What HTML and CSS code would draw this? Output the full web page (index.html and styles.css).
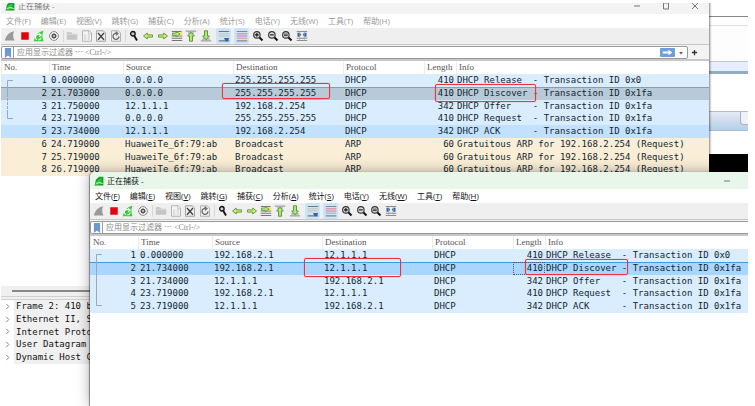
FILE: index.html
```html
<!DOCTYPE html>
<html lang="zh-CN">
<head>
<meta charset="utf-8">
<meta name="viewport" content="width=device-width, initial-scale=1">
<title>正在捕获</title>
<link rel="stylesheet" href="styles.css">
</head>
<body>
<svg class="defs" aria-hidden="true">
  <symbol id="fin" viewBox="0 0 16 16"><path d="M1 14C3 7 7 2.500 13.500 1.500C11.500 5 12 10 14 14Z"/></symbol>
  <symbol id="logo" viewBox="0 0 16 16"><path d="M1 15L3 6L8 1H15V15Z" fill="#149c2b"/><path d="M1 15C3 8 8 4 13 3C11 6 11 9 13 12Z" fill="#2fc442"/><path d="M3 12Q8 9 14 12" stroke="#fff" stroke-width="1.200" fill="none"/></symbol>
  <symbol id="stop" viewBox="0 0 16 16"><path d="M3 3H13V13H3Z" fill="#e3000f"/></symbol>
  <symbol id="restart" viewBox="0 0 16 16"><path d="M1 15C3 7 7 2.500 14 1C12 5 12 10 14 15Z" fill="#35cf35"/><path d="M5 13A3.500 3.500 0 0 1 9 6.500M8 4.500L11 6.800L8 9M11 10A3.500 3.500 0 0 1 7 13" stroke="#fff" stroke-width="1.500" fill="none"/></symbol>
  <symbol id="gear" viewBox="0 0 16 16"><circle cx="8" cy="8" r="5.800" fill="#fff" stroke="#777" stroke-width="1.200"/><circle cx="8" cy="8" r="3" fill="#555"/><path d="M8 4V12M4 8H12M5 5L11 11M11 5L5 11" stroke="#555" stroke-width="1.200"/><circle cx="8" cy="8" r="1.200" fill="#ddd"/></symbol>
  <symbol id="folder" viewBox="0 0 16 16"><path d="M1 3H7L8.500 5H15V13H1Z" fill="#c5c5c5"/><path d="M1 6H15" stroke="#dcdcdc"/></symbol>
  <symbol id="save" viewBox="0 0 16 16"><path d="M2 1H11L14 4V15H2Z" fill="#f4f4f4" stroke="#b2b2b2" stroke-width="1.300"/><path d="M10 1V5H14M4 7H7M9 7H12M4 9.500H7M9 9.500H12M4 12H7M9 12H12" stroke="#bbb" fill="none"/></symbol>
  <symbol id="close" viewBox="0 0 16 16"><path d="M2 1H11L14 4V15H2Z" fill="#eee" stroke="#999" stroke-width="1.200"/><path d="M4 4L12 13M12 4L4 13" stroke="#444" stroke-width="1.800"/></symbol>
  <symbol id="reload" viewBox="0 0 16 16"><path d="M2 1H11L14 4V15H2Z" fill="#eee" stroke="#aaa" stroke-width="1.200"/><path d="M12 8.500A4 4 0 1 1 9 4.500M7.500 2.500L10.500 4.700L8 7" stroke="#666" stroke-width="1.700" fill="none"/></symbol>
  <symbol id="find" viewBox="0 0 16 16"><circle cx="6.500" cy="5" r="3" fill="#ccc" stroke="#111" stroke-width="1.800"/><path d="M8.500 8L12 14" stroke="#111" stroke-width="2.500"/></symbol>
  <symbol id="arrow" viewBox="0 0 16 16"><path d="M2 8L7 4V6.500H14V9.500H7V12Z" fill="#c9ee88" stroke="#6a9a35" stroke-width="1.300"/></symbol>
  <symbol id="goto" viewBox="0 0 16 16"><path d="M1 2H14M1 8H15M1 11H15M1 14H15" stroke="#777" stroke-width="1.400"/><path d="M9 3H15V7H9Z" fill="#f3e45a"/><path d="M2 4H7V2L12 5.500L7 9V7H2Z" fill="#bdec80" stroke="#568b30"/></symbol>
  <symbol id="first" viewBox="0 0 16 16"><path d="M1 1.500H15M4 4H12" stroke="#888" stroke-width="1.300"/><path d="M8 3L12.500 8H10V15H6V8H3.500Z" fill="#aee77a" stroke="#538f30" stroke-width="1.200"/></symbol>
  <symbol id="last" viewBox="0 0 16 16"><path d="M1 14.500H15M3 12H13" stroke="#888" stroke-width="1.300"/><path d="M8 13L12.500 8H10V1H6V8H3.500Z" fill="#aee77a" stroke="#538f30" stroke-width="1.200"/></symbol>
  <symbol id="follow" viewBox="0 0 16 16"><path d="M1 2H15M1 14.500H15" stroke="#777" stroke-width="1.400"/><path d="M1 5H15M1 8H15" stroke="#c9ccca" stroke-width="2"/><path d="M8 10.500H15L13 15H10Z" fill="#2d65a8"/></symbol>
  <symbol id="colors" viewBox="0 0 16 16"><path d="M1 2H15M1 14.500H15" stroke="#888" stroke-width="1.400"/><path d="M1 5H15" stroke="#e59a9a" stroke-width="2"/><path d="M1 8H15" stroke="#b4a6dd" stroke-width="2"/><path d="M1 11H15" stroke="#e8a8aa" stroke-width="2"/></symbol>
  <symbol id="lens" viewBox="0 0 16 16"><circle cx="6.500" cy="6.500" r="4.300" fill="#ddd" stroke="#333" stroke-width="1.500"/><path d="M10 10L14 14" stroke="#111" stroke-width="2.600"/></symbol>
  <symbol id="plus" viewBox="0 0 16 16"><use href="#lens"/><path d="M4 6.500H9M6.500 4V9" stroke="#111" stroke-width="1.500"/></symbol>
  <symbol id="minus" viewBox="0 0 16 16"><use href="#lens"/><path d="M4 6.500H9" stroke="#111" stroke-width="1.500"/></symbol>
  <symbol id="normal" viewBox="0 0 16 16"><use href="#lens"/><path d="M4 5.500H9M4 7.500H9" stroke="#333" stroke-width="1.300"/></symbol>
  <symbol id="resize" viewBox="0 0 16 16"><path d="M1 2H15M1 11H15M1 14H15" stroke="#888" stroke-width="1.300"/><path d="M2 3.500H5L7 6L5 9H2ZM14 3.500H11L9 6L11 9H14Z" fill="#2f69a9"/><path d="M5 2V14M11 2V14" stroke="#aaa"/></symbol>
  <symbol id="bookmark" viewBox="0 0 16 16"><path d="M3 0H13V16L8 12L3 16Z" fill="#6d98d1"/></symbol>
</svg>

<main class="desktop">
  <div class="backdrop" aria-hidden="true">
    <div class="strip strip-top"></div>
    <div class="strip strip-line"></div>
    <div class="strip strip-page"></div>
    <div class="strip strip-bar"></div>
    <div class="strip strip-blank"></div>
    <div class="strip strip-task"><span class="task"></span></div>
    <div class="strip strip-gap"></div>
    <div class="strip strip-black"></div>
  </div>

  <section class="window window-back">
    <header class="titlebar">
      <svg class="app-icon"><use href="#logo"/></svg><span class="title">正在捕获 -</span>
      <button class="caption" aria-label="最小化"><svg viewBox="0 0 8 8"><path d="M1 4H7"/></svg></button>
      <button class="caption" aria-label="最大化"><svg viewBox="0 0 8 8"><path d="M1.500 1V7H6.500V1Z"/></svg></button>
      <button class="caption" aria-label="关闭"><svg viewBox="0 0 8 8"><path d="M1 1L7 7M7 1L1 7"/></svg></button>
    </header>
    <nav class="menubar">
      <button>文件(F)</button><button>编辑(E)</button><button>视图(V)</button><button>跳转(G)</button><button>捕获(C)</button><button>分析(A)</button><button>统计(S)</button><button>电话(Y)</button><button>无线(W)</button><button>工具(T)</button><button>帮助(H)</button>
    </nav>
    <div class="toolbar">
      <div class="tools four">
        <button aria-label="开始"><svg class="gray"><use href="#fin"/></svg></button><button aria-label="停止"><svg><use href="#stop"/></svg></button><button aria-label="重新开始"><svg><use href="#restart"/></svg></button><button aria-label="选项"><svg><use href="#gear"/></svg></button>
      </div>
      <div class="tools four">
        <button aria-label="打开"><svg><use href="#folder"/></svg></button><button aria-label="保存"><svg><use href="#save"/></svg></button><button aria-label="关闭文件"><svg><use href="#close"/></svg></button><button aria-label="重新加载"><svg><use href="#reload"/></svg></button>
      </div>
      <div class="tools six">
        <button aria-label="查找"><svg><use href="#find"/></svg></button><button aria-label="后退"><svg><use href="#arrow"/></svg></button><button aria-label="前进"><svg class="flip"><use href="#arrow"/></svg></button><button aria-label="转到"><svg><use href="#goto"/></svg></button><button aria-label="第一个"><svg><use href="#first"/></svg></button><button aria-label="最后一个"><svg><use href="#last"/></svg></button>
      </div>
      <div class="toggles">
        <button aria-pressed="true" aria-label="自动滚动"><svg><use href="#follow"/></svg></button><button aria-pressed="true" aria-label="着色"><svg><use href="#colors"/></svg></button>
      </div>
      <div class="tools four">
        <button aria-label="放大"><svg><use href="#plus"/></svg></button><button aria-label="缩小"><svg><use href="#minus"/></svg></button><button aria-label="正常大小"><svg><use href="#normal"/></svg></button><button aria-label="调整列宽"><svg><use href="#resize"/></svg></button>
      </div>
    </div>
    <div class="filterbar">
      <div class="filter">
        <button class="mark" aria-label="书签"><svg><use href="#bookmark"/></svg></button>
        <input type="text" aria-label="应用显示过滤器" placeholder="应用显示过滤器 ⋯ &lt;Ctrl-/&gt;">
        <button class="apply" aria-label="应用"><svg viewBox="0 0 16 8"><path d="M3 3H9V1L13 4L9 7V5H3Z"/></svg></button>
        <button class="drop" aria-label="历史"><svg viewBox="0 0 8 8"><path d="M1.500 2.500H6.500L4 6Z"/></svg></button>
      </div>
      <button class="add" aria-label="添加"><svg viewBox="0 0 8 8"><path d="M1 4H7M4 1V7"/></svg></button>
    </div>
    <div class="packets">
      <table>
        <thead><tr><th>No.</th><th>Time</th><th>Source</th><th>Destination</th><th>Protocol</th><th>Length</th><th>Info</th></tr></thead>
        <tbody class="eight">
          <tr><td>1</td><td>0.000000</td><td>0.0.0.0</td><td>255.255.255.255</td><td>DHCP</td><td>410</td><td>DHCP Release  - Transaction ID 0x0</td></tr>
          <tr class="selected"><td>2</td><td>21.703000</td><td>0.0.0.0</td><td>255.255.255.255</td><td>DHCP</td><td>410</td><td>DHCP Discover - Transaction ID 0x1fa</td></tr>
          <tr><td>3</td><td>21.750000</td><td>12.1.1.1</td><td>192.168.2.254</td><td>DHCP</td><td>342</td><td>DHCP Offer    - Transaction ID 0x1fa</td></tr>
          <tr><td>4</td><td>23.719000</td><td>0.0.0.0</td><td>255.255.255.255</td><td>DHCP</td><td>410</td><td>DHCP Request  - Transaction ID 0x1fa</td></tr>
          <tr class="hover"><td>5</td><td>23.734000</td><td>12.1.1.1</td><td>192.168.2.254</td><td>DHCP</td><td>342</td><td>DHCP ACK      - Transaction ID 0x1fa</td></tr>
          <tr class="arp"><td>6</td><td>24.719000</td><td>HuaweiTe_6f:79:ab</td><td>Broadcast</td><td>ARP</td><td>60</td><td>Gratuitous ARP for 192.168.2.254 (Request)</td></tr>
          <tr class="arp"><td>7</td><td>25.719000</td><td>HuaweiTe_6f:79:ab</td><td>Broadcast</td><td>ARP</td><td>60</td><td>Gratuitous ARP for 192.168.2.254 (Request)</td></tr>
          <tr class="arp"><td>8</td><td>26.719000</td><td>HuaweiTe_6f:79:ab</td><td>Broadcast</td><td>ARP</td><td>60</td><td>Gratuitous ARP for 192.168.2.254 (Request)</td></tr>
        </tbody>
      </table>
      <svg class="thread" viewBox="0 0 8 54"><path d="M7 2.500H1.500V16M1.500 34V40.500H7"/><path d="M1.500 16V34" stroke-dasharray="3 1"/></svg>
    </div>
    <div class="scroller"><div class="thumb"></div></div>
    <ul class="tree">
      <li><button><svg viewBox="0 0 8 8"><path d="M2.500 1L5.500 4L2.500 7"/></svg><span>Frame 2: 410 bytes</span></button></li>
      <li><button><svg viewBox="0 0 8 8"><path d="M2.500 1L5.500 4L2.500 7"/></svg><span>Ethernet II, Src</span></button></li>
      <li><button><svg viewBox="0 0 8 8"><path d="M2.500 1L5.500 4L2.500 7"/></svg><span>Internet Protocol</span></button></li>
      <li><button><svg viewBox="0 0 8 8"><path d="M2.500 1L5.500 4L2.500 7"/></svg><span>User Datagram</span></button></li>
      <li><button><svg viewBox="0 0 8 8"><path d="M2.500 1L5.500 4L2.500 7"/></svg><span>Dynamic Host Conf</span></button></li>
    </ul>
  </section>

  <section class="window window-front">
    <header class="titlebar">
      <svg class="app-icon"><use href="#logo"/></svg><span class="title">正在捕获 -</span>
      <button class="caption" aria-label="最小化"><svg viewBox="0 0 8 8"><path d="M1 4H7"/></svg></button>
    </header>
    <nav class="menubar">
      <button>文件(<u>F</u>)</button><button>编辑(<u>E</u>)</button><button>视图(<u>V</u>)</button><button>跳转(<u>G</u>)</button><button>捕获(<u>C</u>)</button><button>分析(<u>A</u>)</button><button>统计(<u>S</u>)</button><button>电话(<u>Y</u>)</button><button>无线(<u>W</u>)</button><button>工具(<u>T</u>)</button><button>帮助(<u>H</u>)</button>
    </nav>
    <div class="toolbar">
      <div class="tools four">
        <button aria-label="开始"><svg class="gray"><use href="#fin"/></svg></button><button aria-label="停止"><svg><use href="#stop"/></svg></button><button aria-label="重新开始"><svg><use href="#restart"/></svg></button><button aria-label="选项"><svg><use href="#gear"/></svg></button>
      </div>
      <div class="tools four">
        <button aria-label="打开"><svg><use href="#folder"/></svg></button><button aria-label="保存"><svg><use href="#save"/></svg></button><button aria-label="关闭文件"><svg><use href="#close"/></svg></button><button aria-label="重新加载"><svg><use href="#reload"/></svg></button>
      </div>
      <div class="tools six">
        <button aria-label="查找"><svg><use href="#find"/></svg></button><button aria-label="后退"><svg><use href="#arrow"/></svg></button><button aria-label="前进"><svg class="flip"><use href="#arrow"/></svg></button><button aria-label="转到"><svg><use href="#goto"/></svg></button><button aria-label="第一个"><svg><use href="#first"/></svg></button><button aria-label="最后一个"><svg><use href="#last"/></svg></button>
      </div>
      <div class="toggles">
        <button aria-pressed="true" aria-label="自动滚动"><svg><use href="#follow"/></svg></button><button aria-pressed="true" aria-label="着色"><svg><use href="#colors"/></svg></button>
      </div>
      <div class="tools four">
        <button aria-label="放大"><svg><use href="#plus"/></svg></button><button aria-label="缩小"><svg><use href="#minus"/></svg></button><button aria-label="正常大小"><svg><use href="#normal"/></svg></button><button aria-label="调整列宽"><svg><use href="#resize"/></svg></button>
      </div>
    </div>
    <div class="filterbar">
      <div class="filter">
        <button class="mark" aria-label="书签"><svg><use href="#bookmark"/></svg></button>
        <input type="text" aria-label="应用显示过滤器" placeholder="应用显示过滤器 ⋯ &lt;Ctrl-/&gt;">
      </div>
    </div>
    <div class="packets">
      <table>
        <thead><tr><th>No.</th><th>Time</th><th>Source</th><th>Destination</th><th>Protocol</th><th>Length</th><th>Info</th></tr></thead>
        <tbody class="five">
          <tr><td>1</td><td>0.000000</td><td>192.168.2.1</td><td>12.1.1.1</td><td>DHCP</td><td>410</td><td>DHCP Release  - Transaction ID 0x0</td></tr>
          <tr class="selected"><td>2</td><td>21.734000</td><td>192.168.2.1</td><td>12.1.1.1</td><td>DHCP</td><td class="focus">410</td><td>DHCP Discover - Transaction ID 0x1fa</td></tr>
          <tr><td>3</td><td>21.734000</td><td>12.1.1.1</td><td>192.168.2.1</td><td>DHCP</td><td>342</td><td>DHCP Offer    - Transaction ID 0x1fa</td></tr>
          <tr><td>4</td><td>23.719000</td><td>192.168.2.1</td><td>12.1.1.1</td><td>DHCP</td><td>410</td><td>DHCP Request  - Transaction ID 0x1fa</td></tr>
          <tr><td>5</td><td>23.719000</td><td>12.1.1.1</td><td>192.168.2.1</td><td>DHCP</td><td>342</td><td>DHCP ACK      - Transaction ID 0x1fa</td></tr>
        </tbody>
      </table>
      <svg class="thread" viewBox="0 0 8 54"><path d="M7 2.500H1.500V53.500H7"/></svg>
    </div>
  </section>

  <div class="note note-a"></div>
  <div class="note note-b"></div>
  <div class="note note-c"></div>
  <div class="note note-d"></div>
</main>
</body>
</html>
```
FILE: styles.css
```css
* { box-sizing: border-box; }

body {
  margin: 0;
  padding: 3px 7px 0 1px;
  background: #fff;
  font-family: "Open Sans", "Noto Sans CJK SC", sans-serif;
  font-size: 8px;
}

button {
  margin: 0;
  padding: 0;
  border: 0;
  background: none;
  color: inherit;
  font: inherit;
}

svg { display: block; }

.defs { position: absolute; width: 0; height: 0; }

.desktop {
  position: relative;
  height: calc(100vh - 3px);
  overflow: hidden;
}

/* Pages showing behind the capture windows */
.backdrop {
  display: flex;
  flex-direction: column;
  width: 48px;
  margin-left: auto;
}
.strip-top { height: 14px; border-bottom: 1px solid #888; }
.strip-line { height: 9px; border-bottom: 1px solid #e2e2e2; }
.strip-page { height: 35px; background: #fdfdfd; }
.strip-bar { height: 13px; background: #e6eefe; border-top: 1px solid #c3cbd0; border-bottom: 3px solid #91aec3; }
.strip-blank { height: 38px; border-bottom: 1px solid #bbb; }
.strip-task {
  display: flex;
  justify-content: flex-end;
  height: 19px;
  background: linear-gradient(#e6ebf4, #b4cfe7);
  border-bottom: 1px solid #a9c0d3;
}
.task { width: 8px; height: 13px; background: #eef2f8; border: 1px solid #a8b2c0; border-width: 0 0 1px 1px; border-radius: 0 0 0 3px; }
.strip-gap { height: 23px; }
.strip-black { height: 20px; background: #000; }

.window {
  position: absolute;
  bottom: 0;
  display: flex;
  flex-direction: column;
  background: #fff;
}
.window-back { top: -6px; left: 0; right: 39px; box-shadow: 1px 0 2px rgba(0, 0, 0, .5); color: #999; }
.window-front { top: 169px; left: 89px; right: 0; border-radius: 5px 0 0 0; box-shadow: -1px 0 1px rgba(0, 0, 0, .4), 0 0 14px rgba(0, 0, 0, .35); color: #111; }

.titlebar {
  display: flex;
  align-items: center;
  height: 17px;
  padding-left: 4px;
  background: #f3f3f3;
}
.window-front .titlebar { background: #e9f7ea; padding-right: 7px; border-radius: 5px 0 0 0; }
.app-icon { width: 10px; height: 10px; margin-right: 3px; }
.title { flex: 1; line-height: 12px; }
.window-back .title { color: #777; }
.caption { width: 29px; height: 17px; display: grid; place-items: center; }
.caption svg { width: 8px; height: 8px; fill: none; stroke: #777; }

.menubar {
  display: flex;
  align-items: center;
  gap: 10px;
  height: 14px;
  padding-left: 5px;
}
.menubar button { line-height: 12px; white-space: nowrap; }

.toolbar {
  display: flex;
  align-items: center;
  gap: 4px;
  height: 16px;
  padding-left: 2px;
  background: #efefef;
}
.toolbar svg { width: 12px; height: 12px; }
.toolbar button { display: grid; place-items: center; height: 16px; }
.tools { display: grid; }
.tools.four { grid-template-columns: repeat(4, 1fr); width: 58px; }
.tools.six { grid-template-columns: repeat(6, 1fr); width: 86px; }
.tools + .tools { position: relative; }
.tools + .tools::before { content: ""; position: absolute; left: -2px; top: 2px; bottom: 2px; border-left: 1px solid #d8d8d8; }
.toggles { display: flex; gap: 3px; margin-left: -1px; margin-right: -2px; }
.toggles button { width: 15px; background: #cce4f8; border-radius: 2px; }
.gray { fill: #9a9a9a; }
.flip { transform: scaleX(-1); }

.filterbar {
  display: flex;
  align-items: center;
  height: 17px;
  padding-top: 1px;
  background: #f3f3f3;
  border-top: 1px solid #c6c6c6;
  border-bottom: 2px solid #c8c8c8;
}
.filter {
  display: flex;
  align-items: center;
  flex: 1;
  height: 13px;
  background: #fff;
  border: 1px solid #999;
  border-radius: 2px;
}
.window-front .filter { border-right: 0; border-radius: 2px 0 0 2px; }
.mark { width: 12px; height: 11px; display: grid; place-items: center; border-right: 1px solid #999; }
.mark svg { width: 10px; height: 10px; }
.filter input {
  flex: 1;
  min-width: 0;
  height: 11px;
  padding: 0 0 0 3px;
  border: 0;
  outline: 0;
  background: none;
  font: 8px/11px "Liberation Serif", "Noto Sans CJK SC", serif;
}
.filter input::placeholder { color: #888; opacity: 1; }
.apply { width: 15px; height: 9px; background: #6e9fd8; border-radius: 1px; }
.apply svg { width: 15px; height: 9px; fill: #fff; }
.drop { width: 12px; display: grid; place-items: center; }
.drop svg { width: 6px; height: 6px; fill: #555; }
.add { width: 21px; padding-left: 3px; }
.add svg { width: 7px; height: 7px; stroke: #333; stroke-width: 1.5; }

.packets { position: relative; }
table, thead { display: block; }
tbody { display: grid; background: #daedff; }
tr { display: grid; grid-template-columns: 48px 74px 110px 110px 81px 32px 1fr; min-height: 0; }
.eight { height: 102px; grid-template-rows: repeat(8, 1fr); }
.five { height: 64px; grid-template-rows: repeat(5, 1fr); }
th {
  height: 13px;
  padding: 0 0 0 3px;
  background: linear-gradient(90deg, #ececec 1px, #fff 1px);
  color: #555;
  font: 9px/13px "Liberation Serif", serif;
  text-align: left;
}
td {
  min-width: 0;
  padding: 0 0 0 2px;
  color: #12272e;
  font: 9px/12px "DejaVu Sans Mono", monospace;
  white-space: pre;
}
td:nth-child(1), td:nth-child(6) { text-align: right; padding-right: 2px; }
td:nth-child(7) { padding-left: 1px; }
.hover { background: #c2e1ff; }
.arp { background: #faeed7; }
.window-back .selected { background: linear-gradient(#8b9dab 1px, #b8cad8 1px); }
.window-front .selected { background: linear-gradient(#4598dc 1px, #a9d6ff 1px); }
.focus { outline: 1px dotted #557; outline-offset: -1px; }
.thread { position: absolute; left: 5px; top: 17px; width: 8px; height: 54px; fill: none; stroke: #9aa9b5; }
.window-front .thread { top: 16px; }

.scroller {
  height: 14px;
  margin-top: 110px;
  padding: 4px 0 0 11px;
  background: #f0f0f0;
  border-bottom: 4px double #d0d0d0;
}
.thumb { height: 2px; background: #888; }
.tree {
  display: grid;
  grid-template-rows: repeat(5, 1fr);
  height: 64px;
  margin: 0;
  padding: 0;
  list-style: none;
}
.tree li { min-height: 0; }
.tree button { display: flex; align-items: center; width: 100%; height: 100%; text-align: left; }
.tree svg { width: 7px; height: 7px; margin: 0 3px; fill: none; stroke: #777; }
.tree span {
  flex: 1;
  align-self: stretch;
  padding-left: 2px;
  background: #f0f0f0;
  color: #111;
  font: 9px/12px "DejaVu Sans Mono", monospace;
}

/* Red highlight frames drawn over the windows */
.note {
  position: absolute;
  border: 1px solid #ef3338;
  border-radius: 2px;
  box-shadow: 0 0 1px #ef3338;
}
.note-a { left: 221px; top: 80px; width: 108px; height: 16px; }
.note-b { left: 434px; top: 81px; width: 101px; height: 18px; }
.note-c { left: 303px; top: 255px; width: 97px; height: 19px; }
.note-d { left: 524px; top: 256px; width: 103px; height: 16px; }
```
